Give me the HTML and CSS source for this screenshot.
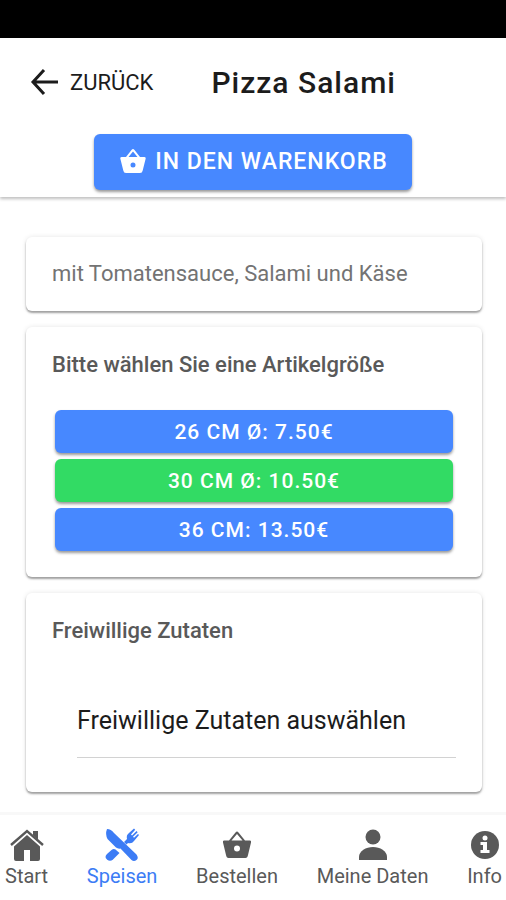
FILE: index.html
```html
<!DOCTYPE html>
<html lang="de">
<head>
<meta charset="utf-8">
<meta name="viewport" content="width=device-width, initial-scale=1">
<title>Pizza Salami</title>
<link rel="stylesheet" href="styles.css">
</head>
<body>
<div class="status-bar"></div>
<header class="header">
  <div class="toolbar">
    <button class="back" type="button">
      <svg class="back-icon" viewBox="0 0 28 28" aria-hidden="true"><path d="M14 2 3 14l11 12M3 14h25" fill="none" stroke="currentColor" stroke-width="3"/></svg>
      <span>ZURÜCK</span>
    </button>
    <h1 class="title">Pizza Salami</h1>
  </div>
  <button class="button cart" type="button">
    <svg class="cart-icon" viewBox="0 0 26 26" aria-hidden="true"><path fill="currentColor" fill-rule="evenodd" d="M1.500 9h4.500L11.500 2q1.500-2 3 0L20 9h4.500q1.500 0 1.200 1.500l-3 12Q22.300 25 20 25H6q-2.300 0-2.700-2.500L.3 10.500Q0 9 1.500 9zM8.500 9h9L13 3.500zM13 14.500a2.500 2.500 0 1 0 0 5 2.500 2.500 0 0 0 0-5z"/></svg>
    <span>IN DEN WARENKORB</span>
  </button>
</header>
<main class="content">
  <section class="card">
    <p class="description">mit Tomatensauce, Salami und Käse</p>
  </section>
  <section class="card">
    <h2 class="card-title">Bitte wählen Sie eine Artikelgröße</h2>
    <div class="sizes">
      <button class="button size" type="button">26 CM Ø: 7.50€</button>
      <button class="button size selected" type="button" aria-pressed="true">30 CM Ø: 10.50€</button>
      <button class="button size" type="button">36 CM: 13.50€</button>
    </div>
  </section>
  <section class="card">
    <h2 class="card-title">Freiwillige Zutaten</h2>
    <button class="picker" type="button">Freiwillige Zutaten auswählen</button>
  </section>
</main>
<nav class="tabs">
  <a class="tab" href="#start">
    <svg class="tab-icon" viewBox="0 0 34 34" aria-hidden="true"><path fill="currentColor" d="M23 3h5v9l-5-4z"/><path d="M1 18 17 4l16 14" fill="none" stroke="#fff" stroke-width="3"/><path fill="currentColor" d="M17 7 4 18.500V31q0 2 2 2h8V22h6v11h8q2 0 2-2V18.500z"/><path d="M1 17 17 3l16 14" fill="none" stroke="currentColor" stroke-width="2.400"/></svg>
    <span>Start</span>
  </a>
  <a class="tab active" href="#speisen">
    <svg class="tab-icon" viewBox="0 0 34 34" aria-hidden="true"><g fill="currentColor"><path d="M2 1Q0 6 2.500 11L11 19.500q2 1.500 4.500 1l11 11.500q2.500 2 5 0t0-5.500L9 5Q6 1 2 1z"/><path d="m10.500 21.500 4 3.500-6.500 6.500q-3 2.500-6 0t0-5.500l4.500-4q2-1.500 4-.5z"/><path d="m19 14 3-3q-1-4 2-6l5-4.500 1.200 1.200-4.200 4.800 1 1L31.500 3l1.200 1.200L28 8.800l1 1L33 6l1 1-5 6q-2 3-6 2l-1.500 1.500z"/></g></svg>
    <span>Speisen</span>
  </a>
  <a class="tab" href="#bestellen">
    <svg class="tab-icon" viewBox="0 0 34 34" aria-hidden="true"><path fill="currentColor" fill-rule="evenodd" d="M4 12.500h5l6.500-8q1.500-2 3 0l6.500 8h5q1.500 0 1 2l-3 12.500Q27.500 30 25.500 30h-17Q6.500 30 6 27L3 14.500q-.5-2 1-2zM11.500 12.500h11L17 6zM17 17.500a3 3 0 1 0 0 6 3 3 0 0 0 0-6z"/></svg>
    <span>Bestellen</span>
  </a>
  <a class="tab" href="#daten">
    <svg class="tab-icon" viewBox="0 0 34 34" aria-hidden="true"><g fill="currentColor"><circle cx="17" cy="9" r="7.500"/><path d="M3 32v-3c0-6 7-10 14-10s14 4 14 10v3z"/></g></svg>
    <span>Meine Daten</span>
  </a>
  <a class="tab" href="#info">
    <svg class="tab-icon" viewBox="0 0 34 34" aria-hidden="true"><circle cx="17" cy="17" r="14" fill="currentColor"/><g fill="#fff"><circle cx="17" cy="10" r="2.500"/><path d="M12.500 14h6.500v8h2.500v3h-9v-3H15v-5h-2.500z"/></g></svg>
    <span>Info</span>
  </a>
</nav>
</body>
</html>
```
FILE: styles.css
```css
* {
  box-sizing: border-box;
}

body {
  margin: 0;
  min-height: 100vh;
  display: flex;
  flex-direction: column;
  background: #fff;
  color: #1c1c1c;
  font-family: Roboto, "Liberation Sans", sans-serif;
}

button {
  border: 0;
  padding: 0;
  background: none;
  color: inherit;
  font: inherit;
}

h1,
h2,
p {
  margin: 0;
}

.status-bar {
  height: 38px;
  background: #000;
}

.header {
  display: flex;
  flex-direction: column;
  align-items: center;
  padding-bottom: 7px;
  box-shadow: 0 2px 3px rgba(0, 0, 0, 0.25);
}

.toolbar {
  align-self: stretch;
  display: flex;
  align-items: center;
  gap: 58px;
  height: 96px;
  padding: 0 30px 8px;
}

.back {
  display: flex;
  align-items: center;
  gap: 12px;
  font-size: 22px;
}

.back-icon {
  width: 28px;
  height: 28px;
}

.title {
  font-size: 30px;
  font-weight: 500;
  letter-spacing: 1px;
}

.button {
  border-radius: 6px;
  background: #4788ff;
  color: #fff;
  font-size: 21px;
  font-weight: 500;
  letter-spacing: 1px;
  box-shadow: 0 2px 3px rgba(0, 0, 0, 0.4);
}

.cart {
  display: flex;
  align-items: center;
  gap: 9px;
  height: 56px;
  padding: 0 24px 2px 26px;
  font-size: 23px;
}

.cart-icon {
  width: 26px;
  height: 26px;
}

.content {
  flex: 1;
  display: flex;
  flex-direction: column;
  gap: 16px;
  padding: 40px 24px 20px 26px;
}

.card {
  padding: 25px 26px;
  border-radius: 6px;
  box-shadow: 0 2px 2px rgba(0, 0, 0, 0.34), 0 0 5px rgba(0, 0, 0, 0.1);
}

.description {
  color: #737373;
  font-size: 22px;
  line-height: 24px;
}

.card-title {
  color: #595959;
  font-size: 22px;
  font-weight: 500;
  line-height: 26px;
}

.sizes {
  display: flex;
  flex-direction: column;
  gap: 6px;
  padding: 32px 3px 1px;
}

.size {
  height: 43px;
}

.selected {
  background: #32db64;
}

.picker {
  display: block;
  width: calc(100% - 25px);
  height: 74px;
  margin: 40px 0 9px 25px;
  border-bottom: 1px solid #d2d2d2;
  font-size: 25px;
  text-align: left;
}

.tabs {
  display: flex;
  justify-content: space-between;
  padding: 13px 4px 12px 5px;
  border-top: 3px solid #f8f8f8;
}

.tab {
  display: flex;
  flex-direction: column;
  align-items: center;
  color: #595959;
  font-size: 20px;
  line-height: 28px;
  text-decoration: none;
}

.tab-icon {
  width: 34px;
  height: 34px;
}

.active {
  color: #3c7cf5;
}
```
